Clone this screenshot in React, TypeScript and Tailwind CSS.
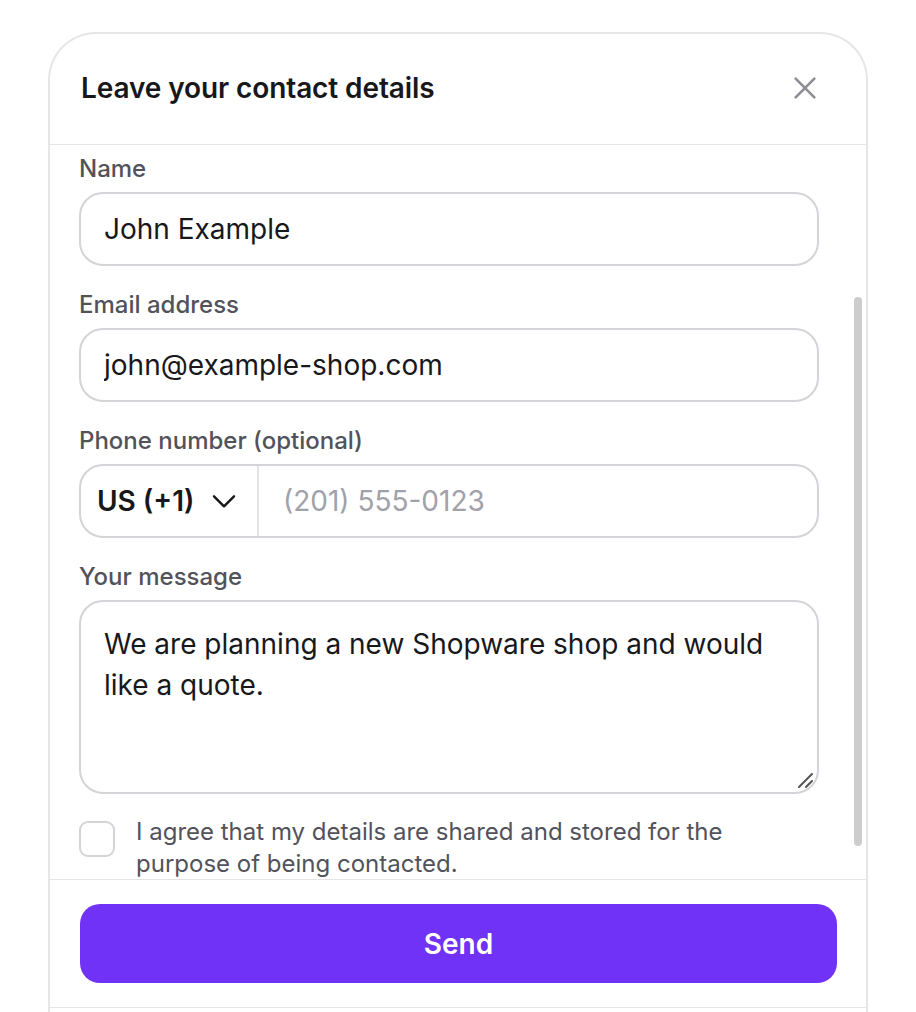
import React from 'react';

const font = { fontFamily: 'Inter, "Noto Sans", sans-serif' };

function Field({ label, children }: { label: string; children: React.ReactNode }) {
  return (
    <div className="flex flex-col gap-[8px]">
      <label className="text-[24px] leading-[30px] font-medium text-[#52525b]">{label}</label>
      {children}
    </div>
  );
}

export default function App() {
  return (
    <div className="min-h-screen bg-white pt-[32px] pl-[48px]" style={font}>
      <div className="w-[820px] rounded-t-[48px] border-2 border-b-0 border-[#e6e6e6] bg-white overflow-hidden">
        {/* header */}
        <div className="h-[111px] flex items-center justify-between pl-[31px] pr-[45px] border-b border-[#e4e4e7]">
          <h2 className="text-[28px] font-semibold text-[#18181b] tracking-[-0.1px] -mt-[3px]">Leave your contact details</h2>
          <button className="text-[#8e8e96] -mt-[3px]" aria-label="Close">
            <svg width="32" height="32" viewBox="0 0 24 24" fill="none" stroke="currentColor" strokeWidth="2" strokeLinecap="round">
              <path d="M5 5l14 14M19 5L5 19" />
            </svg>
          </button>
        </div>

        {/* body */}
        <div className="relative h-[734px] overflow-hidden pl-[29px] pr-[47px] pt-[9px]">
          <div className="flex flex-col gap-[24px]">
            <Field label="Name">
              <input
                readOnly
                value="John Example"
                className="h-[74px] w-full rounded-[24px] border-2 border-[#d4d4d8] px-[23px] text-[28px] text-[#18181b] outline-none"
              />
            </Field>
            <Field label="Email address">
              <input
                readOnly
                value="john@example-shop.com"
                className="h-[74px] w-full rounded-[24px] border-2 border-[#d4d4d8] px-[23px] text-[28px] text-[#18181b] outline-none"
              />
            </Field>
            <Field label="Phone number (optional)">
              <div className="h-[74px] w-full rounded-[24px] border-2 border-[#d4d4d8] flex items-center overflow-hidden">
                <div className="h-full w-[178px] flex items-center justify-between pl-[16px] pr-[17px] border-r-2 border-[#e4e4e7]">
                  <span className="text-[28px] font-semibold text-[#18181b]">US (+1)</span>
                  <svg width="32" height="32" viewBox="0 0 24 24" fill="none" stroke="#18181b" strokeWidth="1.8" strokeLinecap="round" strokeLinejoin="round">
                    <path d="M4.5 8.5l7.5 7.5 7.5-7.5" />
                  </svg>
                </div>
                <input
                  readOnly
                  placeholder="(201) 555-0123"
                  className="h-full flex-1 px-[24px] text-[28px] text-[#18181b] placeholder:text-[#a1a1aa] outline-none"
                />
              </div>
            </Field>
            <Field label="Your message">
              <div className="relative">
                <textarea
                  readOnly
                  defaultValue="We are planning a new Shopware shop and would like a quote."
                  className="block h-[194px] w-full rounded-[24px] border-2 border-[#d4d4d8] px-[23px] pt-[22px] text-[28px] leading-[41px] text-[#18181b] outline-none resize-none"
                />
                <svg className="absolute right-[4px] bottom-[5px]" width="18" height="18" viewBox="0 0 18 18" stroke="#555" strokeWidth="2" strokeLinecap="round">
                  <path d="M2 16L15 3M9 16l6-6" />
                </svg>
              </div>
            </Field>
            <div className="flex items-start gap-[21px] -mt-[2px]">
              <div className="mt-[5px] h-[36px] w-[36px] shrink-0 rounded-[9px] border-2 border-[#d4d4d8] bg-white" />
              <p className="w-[620px] text-[24px] leading-[32px] text-[#52525b]">
                I agree that my details are shared and stored for the purpose of being contacted.
              </p>
            </div>
          </div>
          {/* scrollbar */}
          <div className="absolute right-[4px] top-[152px] w-[8px] h-[549px] rounded-full bg-[#cdcdcd]" />
        </div>

        {/* footer */}
        <div className="border-t border-[#e4e4e7] pl-[30px] pr-[29px] pt-[24px] pb-[24px] border-b">
          <button className="h-[79px] w-full rounded-[20px] bg-[#7132f8] text-white text-[28px] font-semibold">
            Send
          </button>
        </div>
        <div className="h-[10px]" />
      </div>
    </div>
  );
}
